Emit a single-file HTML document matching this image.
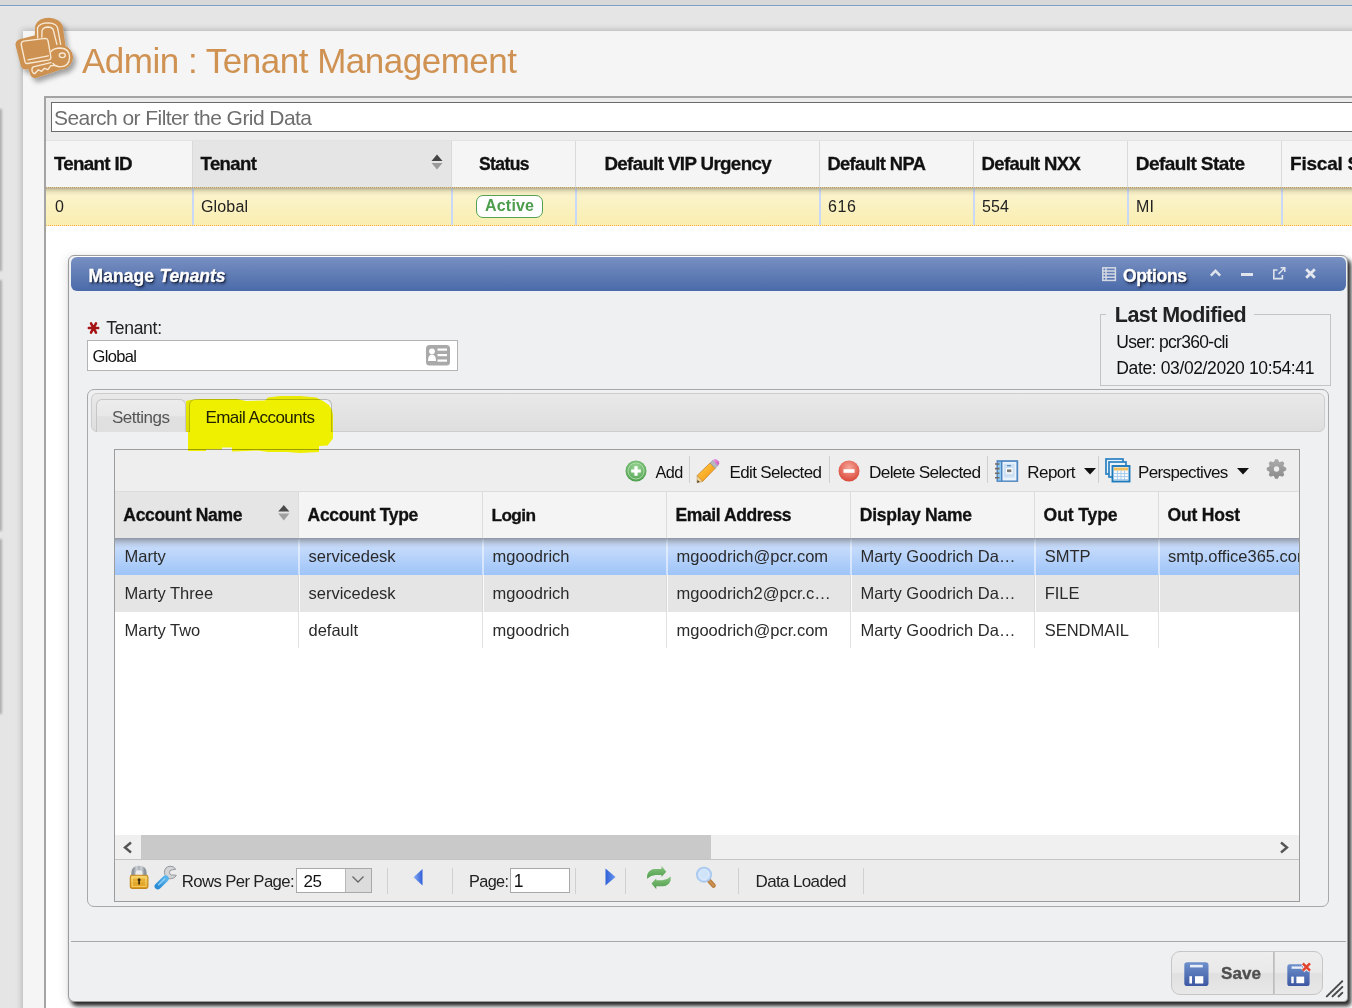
<!DOCTYPE html>
<html><head><meta charset="utf-8"><title>Admin : Tenant Management</title>
<style>
html,body{margin:0;padding:0;}
body{width:1352px;height:1008px;overflow:hidden;position:relative;background:#e5e5e5;font-family:"Liberation Sans",sans-serif;}
.a{position:absolute;}
.t{position:absolute;white-space:nowrap;line-height:normal;}
svg.a{overflow:visible;}
</style></head><body>
<div class="a" style="left:0px;top:0px;width:1352px;height:5px;background:#d8d8d8"></div>
<div class="a" style="left:0px;top:5px;width:1352px;height:1px;background:#7d9dc2"></div>
<div class="a" style="left:0px;top:6px;width:1352px;height:1px;background:#ebe8e8"></div>
<div class="a" style="left:-2px;top:109px;width:4px;height:162px;background:#b0b0b0;filter:blur(0.8px)"></div>
<div class="a" style="left:-2px;top:280px;width:4px;height:251px;background:#b0b0b0;filter:blur(0.8px)"></div>
<div class="a" style="left:-2px;top:539px;width:4px;height:175px;background:#b0b0b0;filter:blur(0.8px)"></div>
<div class="a" style="left:23px;top:31px;width:1340px;height:990px;background:#f5f5f5;box-shadow:-1px -1px 6px rgba(0,0,0,0.22)"></div>
<div class="t" style="left:82.00px;top:41.33px;font-size:35px;color:#cf9252;letter-spacing:-0.494px;">Admin : Tenant Management</div>
<div class="a" style="left:44px;top:96px;width:1320px;height:920px;background:#fff;border:2px solid #a4a4a4;box-sizing:border-box"></div>
<div class="a" style="left:46px;top:98px;width:1310px;height:42px;background:#ececec"></div>
<div class="a" style="left:51px;top:102px;width:1310px;height:30px;background:#fff;border:1px solid #6b6b6b;box-sizing:border-box"></div>
<div class="t" style="left:54.00px;top:106.00px;font-size:21px;color:#6e6e6e;letter-spacing:-0.562px;">Search or Filter the Grid Data</div>
<div class="a" style="left:46px;top:140px;width:1310px;height:47px;background:#f5f5f5;border-top:1px solid #e2e2e2;box-sizing:border-box"></div>
<div class="a" style="left:192px;top:141px;width:259px;height:46px;background:#e5e5e5"></div>
<div class="a" style="left:192px;top:141px;width:1px;height:46px;background:#dadada"></div>
<div class="a" style="left:451px;top:141px;width:1px;height:46px;background:#dadada"></div>
<div class="a" style="left:575px;top:141px;width:1px;height:46px;background:#dadada"></div>
<div class="a" style="left:819px;top:141px;width:1px;height:46px;background:#dadada"></div>
<div class="a" style="left:973px;top:141px;width:1px;height:46px;background:#dadada"></div>
<div class="a" style="left:1127px;top:141px;width:1px;height:46px;background:#dadada"></div>
<div class="a" style="left:1281px;top:141px;width:1px;height:46px;background:#dadada"></div>
<div class="a" style="left:46px;top:187px;width:1310px;height:38px;background:linear-gradient(#9d9779 0px,#c9c19c 2px,#ece4bc 5px,#fbf3ca 9px,#faeeb0 38px)"></div>
<div class="a" style="left:46px;top:187px;width:1310px;height:1px;background:repeating-linear-gradient(90deg,#b89a62 0 1px,#ddd0b0 1px 2px)"></div>
<div class="a" style="left:46px;top:225px;width:1310px;height:1px;background:repeating-linear-gradient(90deg,#f6b040 0 1px,#fde8b8 1px 2px)"></div>
<div class="a" style="left:192px;top:188px;width:2px;height:37px;background:linear-gradient(#a8b0c0,#c8d8f6 6px,#c8d8f6)"></div>
<div class="a" style="left:451px;top:188px;width:2px;height:37px;background:linear-gradient(#a8b0c0,#c8d8f6 6px,#c8d8f6)"></div>
<div class="a" style="left:575px;top:188px;width:2px;height:37px;background:linear-gradient(#a8b0c0,#c8d8f6 6px,#c8d8f6)"></div>
<div class="a" style="left:819px;top:188px;width:2px;height:37px;background:linear-gradient(#a8b0c0,#c8d8f6 6px,#c8d8f6)"></div>
<div class="a" style="left:973px;top:188px;width:2px;height:37px;background:linear-gradient(#a8b0c0,#c8d8f6 6px,#c8d8f6)"></div>
<div class="a" style="left:1127px;top:188px;width:2px;height:37px;background:linear-gradient(#a8b0c0,#c8d8f6 6px,#c8d8f6)"></div>
<div class="a" style="left:1281px;top:188px;width:2px;height:37px;background:linear-gradient(#a8b0c0,#c8d8f6 6px,#c8d8f6)"></div>
<svg class="a" style="left:430px;top:153px" width="14" height="18"><path d="M1.5 8 L7 1.5 L12.5 8Z" fill="#444"/><path d="M1.5 10 L7 16.5 L12.5 10Z" fill="#9a9a9a"/></svg>
<div class="t" style="left:54.00px;top:153.03px;font-size:18.75px;color:#111;font-weight:bold;letter-spacing:-0.694px;-webkit-text-stroke:0.3px #111;">Tenant ID</div>
<div class="t" style="left:200.60px;top:153.26px;font-size:18.5px;color:#111;font-weight:bold;letter-spacing:-0.610px;-webkit-text-stroke:0.3px #111;">Tenant</div>
<div class="t" style="left:479.00px;top:154.16px;font-size:17.5px;color:#111;font-weight:bold;letter-spacing:-0.600px;-webkit-text-stroke:0.3px #111;">Status</div>
<div class="t" style="left:604.40px;top:153.03px;font-size:18.75px;color:#111;font-weight:bold;letter-spacing:-0.644px;-webkit-text-stroke:0.3px #111;">Default VIP Urgency</div>
<div class="t" style="left:827.40px;top:153.48px;font-size:18.25px;color:#111;font-weight:bold;letter-spacing:-0.560px;-webkit-text-stroke:0.3px #111;">Default NPA</div>
<div class="t" style="left:981.60px;top:153.26px;font-size:18.5px;color:#111;font-weight:bold;letter-spacing:-0.670px;-webkit-text-stroke:0.3px #111;">Default NXX</div>
<div class="t" style="left:1135.80px;top:152.81px;font-size:19px;color:#111;font-weight:bold;letter-spacing:-0.579px;-webkit-text-stroke:0.3px #111;">Default State</div>
<div class="t" style="left:1290.00px;top:152.81px;font-size:19px;color:#111;font-weight:bold;letter-spacing:-0.223px;-webkit-text-stroke:0.3px #111;">Fiscal Start</div>
<div class="t" style="left:55.00px;top:198.12px;font-size:16px;color:#222;">0</div>
<div class="t" style="left:201.00px;top:198.12px;font-size:16px;color:#222;letter-spacing:0.150px;">Global</div>
<div class="t" style="left:828.00px;top:198.12px;font-size:16px;color:#222;letter-spacing:0.650px;">616</div>
<div class="t" style="left:982.00px;top:198.12px;font-size:16px;color:#222;letter-spacing:0.150px;">554</div>
<div class="t" style="left:1136.00px;top:198.12px;font-size:16px;color:#222;letter-spacing:0.250px;">MI</div>
<div class="a" style="left:476px;top:195px;width:67px;height:23px;background:#fff;border:1px solid #53a253;border-radius:7px;box-sizing:border-box"></div>
<div class="t" style="left:485.00px;top:197.02px;font-size:16px;color:#4c9d4c;font-weight:bold;letter-spacing:0.200px;">Active</div>
<svg class="a" style="left:12px;top:14px" width="72" height="72" viewBox="0 0 72 72">
<defs><filter id="ds" x="-30%" y="-30%" width="160%" height="160%"><feGaussianBlur in="SourceAlpha" stdDeviation="2.6"/><feOffset dx="3" dy="4"/><feComponentTransfer><feFuncA type="linear" slope="0.35"/></feComponentTransfer><feMerge><feMergeNode/><feMergeNode in="SourceGraphic"/></feMerge></filter></defs>
<g filter="url(#ds)">
<g fill="#cd9251" stroke="#cd9251" stroke-linejoin="round" stroke-linecap="round">
<path d="M9 30.5 L33.5 24.3 L39 44 L14 50Z" stroke-width="11"/>
<path d="M27.5 25 L27.8 13 Q30 8.5 36.8 8.5 Q44 9 46 13 L48.6 31 L38 36Z" stroke-width="9.5"/>
<circle cx="48.5" cy="43.3" r="12"/>
<path d="M21 53 L40 48 L44 52 L23 59Z" stroke-width="10"/>
</g>
<g fill="none" stroke="#fbeedd" stroke-width="1.35" stroke-linejoin="round" stroke-linecap="round" opacity="0.95">
<path d="M9.2 30.5 Q9.3 27.6 11.5 27.2 L33.3 24.3 Q35.6 24.5 36 26.6 L38.9 43 Q39 45.4 37 45.8 L15.5 49.5 Q13.5 49.8 13 47.8 Z"/>
<path d="M16 45.9 L36.3 41.8"/>
<path d="M25.7 23.8 L25.5 14 Q27 8.8 36.6 8.8 Q44.5 9.3 45.6 14 L48.6 30.3"/>
<path d="M29.8 23.2 L30 16.5 Q31.5 13 36 13 Q40.5 13.3 41.3 16 L44.9 30.4"/>
<path d="M39 37.5 Q42 34 48.3 34 Q57.6 34.5 57.6 43.4 Q57.2 52.6 48.3 52.8 Q43.5 52.6 41 49.5"/>
<ellipse cx="50.3" cy="41.3" rx="3" ry="2.3"/>
<path d="M38.9 48.6 L21.2 52.9 Q19.3 54.2 20.2 57.2 Q21.2 59.8 23 59.5 L26.3 55.8 L29.6 57.3 L32.5 54.3 L35.9 55.6 L38.8 51.7 L44.3 51.6"/>
</g>
</g></svg>
<div class="a" style="left:68px;top:255px;width:1280px;height:747px;background:#eff0f2;border:1px solid #9c9c9c;border-radius:6px 6px 4px 6px;box-sizing:border-box;box-shadow:3px 4px 4px rgba(0,0,0,0.85),-3px 0 8px rgba(0,0,0,0.08)"></div>
<div class="a" style="left:75px;top:256px;width:1266px;height:1px;background:#fff"></div>
<div class="a" style="left:71px;top:257px;width:1275px;height:34px;background:linear-gradient(#7890c2,#4a6aa9);border-radius:6px"></div>
<div class="t" style="left:88.50px;top:266.16px;font-size:17.5px;color:#fff;font-weight:bold;letter-spacing:0.050px;text-shadow:1px 1px 1px #17223e,1.5px 1.5px 3px rgba(10,20,50,0.7);-webkit-text-stroke:0.35px #fff;">Manage</div>
<div class="t" style="left:159.50px;top:266.16px;font-size:17.5px;color:#fff;font-weight:bold;font-style:italic;letter-spacing:-0.092px;text-shadow:1px 1px 1px #17223e,1.5px 1.5px 3px rgba(10,20,50,0.7);-webkit-text-stroke:0.35px #fff;">Tenants</div>
<div class="t" style="left:1123.00px;top:266.16px;font-size:17.5px;color:#fff;font-weight:bold;letter-spacing:-0.350px;text-shadow:1px 1px 1px #17223e,1.5px 1.5px 3px rgba(10,20,50,0.7);-webkit-text-stroke:0.35px #fff;">Options</div>
<svg class="a" style="left:1101px;top:266px" width="16" height="16"><g fill="none" stroke="#d4d9e3" stroke-width="1.5"><rect x="1.8" y="1.8" width="12.6" height="12.6"/><path d="M2 5H14.5M2 8.1H14.5M2 11.2H14.5M5 2V14.5"/></g></svg>
<svg class="a" style="left:1209px;top:268px" width="14" height="10"><path d="M1.8 7.6 L6.5 2.8 L11.2 7.6" fill="none" stroke="#dfe3ec" stroke-width="2.4"/></svg>
<div class="a" style="left:1241px;top:273px;width:12px;height:3px;background:#dfe3ec"></div>
<svg class="a" style="left:1272px;top:266px" width="15" height="15"><path d="M5.5 4H1.8V12.6H10.4V9" fill="none" stroke="#dfe3ec" stroke-width="1.6"/><path d="M6.5 8L12.2 2.3M8.6 1.8H12.8V6" fill="none" stroke="#dfe3ec" stroke-width="1.5"/></svg>
<svg class="a" style="left:1304px;top:267px" width="13" height="13"><path d="M2.2 2.2L10.8 10.8M10.8 2.2L2.2 10.8" stroke="#e4e7ee" stroke-width="2.8"/></svg>
<svg class="a" style="left:84px;top:318px" width="20" height="20"><g stroke="#a51414" stroke-width="2.5" stroke-linecap="round" filter="blur(0.4px)"><path d="M4.8 10H14.2M7 5.3L12 14.7M12 5.3L7 14.7"/></g></svg>
<div class="t" style="left:106.30px;top:318.16px;font-size:17.5px;color:#222;letter-spacing:-0.283px;">Tenant:</div>
<div class="a" style="left:87px;top:340px;width:371px;height:31px;background:#fff;border:1px solid #b4b4b4;box-sizing:border-box"></div>
<div class="t" style="left:92.60px;top:347.07px;font-size:16.5px;color:#111;letter-spacing:-0.660px;">Global</div>
<svg class="a" style="left:426px;top:345px" width="24" height="21"><rect x="0" y="0" width="24" height="20.5" rx="3.5" fill="#a9a9a9"/><circle cx="6" cy="6.3" r="2.9" fill="#fff"/><path d="M2 16 Q2 9.5 6 9.5 Q10 9.5 10 16Z" fill="#fff"/><rect x="11.5" y="3.5" width="9.5" height="2.2" fill="#fff"/><rect x="11.5" y="9" width="9.5" height="2.2" fill="#fff"/><rect x="11.5" y="14.5" width="9.5" height="2.2" fill="#fff"/></svg>
<div class="a" style="left:1100px;top:314px;width:231px;height:72px;border:1px solid #c4c4c4;box-sizing:border-box"></div>
<div class="a" style="left:1106px;top:306px;width:148px;height:14px;background:#eff0f2"></div>
<div class="t" style="left:1114.80px;top:302.54px;font-size:21.5px;color:#222;font-weight:bold;letter-spacing:-0.554px;">Last Modified</div>
<div class="t" style="left:1116.30px;top:331.76px;font-size:17.5px;color:#111;letter-spacing:-0.677px;">User: pcr360-cli</div>
<div class="t" style="left:1116.30px;top:358.16px;font-size:17.5px;color:#111;letter-spacing:-0.381px;">Date: 03/02/2020 10:54:41</div>
<div class="a" style="left:87px;top:389px;width:1242px;height:518px;border:1px solid #a9a9a9;border-radius:7px;box-sizing:border-box"></div>
<div class="a" style="left:91px;top:393px;width:1234px;height:39px;background:linear-gradient(#e9e9e9,#dedede);border:1px solid #cdcdcd;border-radius:6px;box-sizing:border-box"></div>
<div class="a" style="left:96px;top:399px;width:90px;height:33px;background:linear-gradient(#ececec 0,#e8e8e8 50%,#e0e0e0 52%,#dfdfdf 100%);border:1px solid #c6c6c6;border-bottom:none;border-radius:6px 6px 0 0;box-sizing:border-box"></div>
<div class="t" style="left:112.00px;top:407.62px;font-size:17px;color:#555;letter-spacing:-0.493px;">Settings</div>
<div class="a" style="left:189px;top:399px;width:143px;height:33px;background:#eff0f2;border:1px solid #b8b8b8;border-bottom:none;border-radius:6px 6px 0 0;box-sizing:border-box"></div>
<div class="t" style="left:205.40px;top:407.92px;font-size:17px;color:#222;letter-spacing:-0.515px;">Email Accounts</div>
<div class="a" style="left:114px;top:449px;width:1186px;height:453px;background:#fff;border:1px solid #9c9c9c;box-sizing:border-box"></div>
<div class="a" style="left:115px;top:450px;width:1184px;height:41px;background:#eeeeee"></div>
<div class="a" style="left:115px;top:491px;width:1184px;height:1px;background:#dcdcdc"></div>
<svg class="a" style="left:625px;top:460px" width="22" height="22"><defs><radialGradient id="gg" cx="50%" cy="35%" r="65%"><stop offset="0" stop-color="#9fd89a"/><stop offset="1" stop-color="#4e9f4e"/></radialGradient></defs><circle cx="11" cy="11" r="10.5" fill="url(#gg)"/><circle cx="11" cy="11" r="8" fill="none" stroke="#b8e4b0" stroke-width="1" opacity="0.8"/><path d="M11 6.2V15.8M6.2 11H15.8" stroke="#fff" stroke-width="3.2"/></svg>
<div class="t" style="left:655.40px;top:463.29px;font-size:16.25px;color:#111;letter-spacing:-0.500px;">Add</div>
<div class="a" style="left:689px;top:456px;width:1px;height:27px;background:#cfcfcf"></div>
<svg class="a" style="left:692px;top:455px" width="30" height="30"><defs><linearGradient id="pc" x1="0" y1="0" x2="1" y2="1"><stop offset="0" stop-color="#ffd050"/><stop offset="0.5" stop-color="#fbb02a"/><stop offset="1" stop-color="#ee8a12"/></linearGradient><linearGradient id="er" x1="0" y1="0" x2="1" y2="1"><stop offset="0" stop-color="#f0a8e8"/><stop offset="1" stop-color="#c84cb8"/></linearGradient></defs><path d="M5.2 20.5 L18 8 L23.2 13.3 L10.5 26.5Z" fill="url(#pc)" stroke="#c07a20" stroke-width="0.7"/><path d="M18 8 L20.8 5.2 L26 10.5 L23.2 13.3Z" fill="#b4b8bc" stroke="#8a8e92" stroke-width="0.5"/><path d="M20.8 5.2 Q22.5 3.4 24.5 4.2 L27 6.6 Q28.2 8.5 26 10.5Z" fill="url(#er)"/><path d="M5.2 20.5 L10.5 26.5 L5 27.8Z" fill="#f6d896" stroke="#b08040" stroke-width="0.5"/><path d="M5 27.8 L5.6 24.8 L7.8 26.9Z" fill="#5a4a38"/></svg>
<div class="t" style="left:729.50px;top:462.62px;font-size:17.0px;color:#111;letter-spacing:-0.642px;">Edit Selected</div>
<div class="a" style="left:829px;top:456px;width:1px;height:27px;background:#cfcfcf"></div>
<svg class="a" style="left:838px;top:460px" width="22" height="22"><defs><radialGradient id="rg" cx="50%" cy="35%" r="65%"><stop offset="0" stop-color="#f7a79a"/><stop offset="1" stop-color="#d9483a"/></radialGradient></defs><circle cx="11" cy="11" r="10.5" fill="url(#rg)"/><rect x="5.5" y="9.2" width="11" height="3.6" fill="#fff"/></svg>
<div class="t" style="left:869.00px;top:462.39px;font-size:17.25px;color:#111;letter-spacing:-0.700px;">Delete Selected</div>
<div class="a" style="left:987px;top:456px;width:1px;height:27px;background:#cfcfcf"></div>
<svg class="a" style="left:992px;top:456px" width="30" height="30"><rect x="5.2" y="4.9" width="20.3" height="20.3" fill="#6a9ed4" stroke="#5086c0" stroke-width="1.4"/><rect x="6" y="6" width="3" height="18.5" fill="#8cc8f0"/><rect x="10.3" y="6" width="14" height="18.4" fill="#eaf3fc"/><path d="M9.7 5V25" stroke="#4a80bc" stroke-width="1.2"/><rect x="11.8" y="7.8" width="10.8" height="13.8" fill="#cde0f4"/><rect x="14" y="12" width="6.6" height="5.8" rx="1" fill="#fff"/><rect x="15" y="13.4" width="4.4" height="2.8" fill="#7a7a7a"/><rect x="15" y="9" width="4" height="1.3" fill="#5a8cc4"/><g stroke="#746a64" stroke-width="1.6"><path d="M3 8H7.5M3 12.6H7.5M3 17.2H7.5M3 21.8H7.5"/></g></svg>
<div class="t" style="left:1027.30px;top:462.62px;font-size:17.0px;color:#111;letter-spacing:-0.570px;">Report</div>
<svg class="a" style="left:1084px;top:468px" width="12" height="7"><path d="M0 0H12L6 6.5Z" fill="#111"/></svg>
<div class="a" style="left:1098px;top:456px;width:1px;height:27px;background:#cfcfcf"></div>
<svg class="a" style="left:1105px;top:458px" width="26" height="25"><rect x="1" y="1" width="17" height="15" fill="#eaf3fb" stroke="#2a80c0" stroke-width="1.7"/><rect x="4" y="4" width="17" height="15" fill="#eaf3fb" stroke="#2a80c0" stroke-width="1.7"/><rect x="7.5" y="8" width="17" height="15.5" fill="#f4f8fc" stroke="#1e7abb" stroke-width="1.9"/><rect x="9" y="9.5" width="14" height="3" fill="#f0c060"/><g stroke="#9cc4e8" stroke-width="0.8"><path d="M9 15.5H23M9 18.5H23M9 21.5H23M12.5 12.5V23M16 12.5V23M19.5 12.5V23"/></g></svg>
<div class="t" style="left:1138.00px;top:462.62px;font-size:17.0px;color:#111;letter-spacing:-0.636px;">Perspectives</div>
<svg class="a" style="left:1237px;top:468px" width="12" height="7"><path d="M0 0H12L6 6.5Z" fill="#111"/></svg>
<svg class="a" style="left:1266px;top:459px" width="21" height="20"><defs><linearGradient id="gr" x1="0" y1="0" x2="0" y2="1"><stop offset="0" stop-color="#a9a9a9"/><stop offset="1" stop-color="#8e8e8e"/></linearGradient></defs><path d="M7.85 3.09 L9.14 0.30 L11.86 0.30 L13.15 3.09 L13.51 3.24 L16.40 2.17 L18.33 4.10 L17.26 6.99 L17.41 7.35 L20.20 8.64 L20.20 11.36 L17.41 12.65 L17.26 13.01 L18.33 15.90 L16.40 17.83 L13.51 16.76 L13.15 16.91 L11.86 19.70 L9.14 19.70 L7.85 16.91 L7.49 16.76 L4.60 17.83 L2.67 15.90 L3.74 13.01 L3.59 12.65 L0.80 11.36 L0.80 8.64 L3.59 7.35 L3.74 6.99 L2.67 4.10 L4.60 2.17 L7.49 3.24Z" fill="url(#gr)"/><circle cx="10.5" cy="10" r="7.4" fill="url(#gr)"/><circle cx="10.5" cy="10" r="2.7" fill="#eee"/></svg>
<div class="a" style="left:115px;top:492px;width:1184px;height:46px;background:#f4f4f4"></div>
<div class="a" style="left:115px;top:492px;width:183px;height:46px;background:#e5e5e5"></div>
<div class="a" style="left:298px;top:492px;width:1px;height:46px;background:#dcdcdc"></div>
<div class="a" style="left:482px;top:492px;width:1px;height:46px;background:#dcdcdc"></div>
<div class="a" style="left:666px;top:492px;width:1px;height:46px;background:#dcdcdc"></div>
<div class="a" style="left:850px;top:492px;width:1px;height:46px;background:#dcdcdc"></div>
<div class="a" style="left:1034px;top:492px;width:1px;height:46px;background:#dcdcdc"></div>
<div class="a" style="left:1158px;top:492px;width:1px;height:46px;background:#dcdcdc"></div>
<svg class="a" style="left:277px;top:504px" width="14" height="18"><path d="M1.2 7.6 L6.8 1 L12.4 7.6Z" fill="#4a4a4a"/><path d="M1.2 9.6 L6.8 16.6 L12.4 9.6Z" fill="#a0a0a0"/></svg>
<div class="t" style="left:123.30px;top:505.16px;font-size:17.5px;color:#111;font-weight:bold;letter-spacing:-0.305px;-webkit-text-stroke:0.3px #111;">Account Name</div>
<div class="t" style="left:307.60px;top:505.16px;font-size:17.5px;color:#111;font-weight:bold;letter-spacing:-0.336px;-webkit-text-stroke:0.3px #111;">Account Type</div>
<div class="t" style="left:491.50px;top:505.39px;font-size:17.25px;color:#111;font-weight:bold;letter-spacing:-0.613px;-webkit-text-stroke:0.3px #111;">Login</div>
<div class="t" style="left:675.60px;top:505.16px;font-size:17.5px;color:#111;font-weight:bold;letter-spacing:-0.421px;-webkit-text-stroke:0.3px #111;">Email Address</div>
<div class="t" style="left:859.80px;top:505.16px;font-size:17.5px;color:#111;font-weight:bold;letter-spacing:-0.236px;-webkit-text-stroke:0.3px #111;">Display Name</div>
<div class="t" style="left:1043.60px;top:505.16px;font-size:17.5px;color:#111;font-weight:bold;letter-spacing:-0.079px;-webkit-text-stroke:0.3px #111;">Out Type</div>
<div class="t" style="left:1167.60px;top:505.16px;font-size:17.5px;color:#111;font-weight:bold;letter-spacing:-0.214px;-webkit-text-stroke:0.3px #111;">Out Host</div>
<div class="a" style="left:115px;top:538px;width:1184px;height:37px;background:linear-gradient(#8d95a3 0px,#a7b3c7 3px,#bacbe6 6px,#c4dafb 10px,#9ec4f8 37px)"></div>
<div class="a" style="left:115px;top:575px;width:1184px;height:37px;background:#e5e5e5"></div>
<div class="a" style="left:298px;top:538px;width:2px;height:37px;background:linear-gradient(rgba(255,255,255,0.05),rgba(255,255,255,0.5) 10px)"></div>
<div class="a" style="left:298px;top:575px;width:1px;height:37px;background:#d9d9d9"></div>
<div class="a" style="left:299px;top:575px;width:1px;height:37px;background:#fbfbfb"></div>
<div class="a" style="left:298px;top:612px;width:1px;height:36px;background:#e2e2e2"></div>
<div class="a" style="left:482px;top:538px;width:2px;height:37px;background:linear-gradient(rgba(255,255,255,0.05),rgba(255,255,255,0.5) 10px)"></div>
<div class="a" style="left:482px;top:575px;width:1px;height:37px;background:#d9d9d9"></div>
<div class="a" style="left:483px;top:575px;width:1px;height:37px;background:#fbfbfb"></div>
<div class="a" style="left:482px;top:612px;width:1px;height:36px;background:#e2e2e2"></div>
<div class="a" style="left:666px;top:538px;width:2px;height:37px;background:linear-gradient(rgba(255,255,255,0.05),rgba(255,255,255,0.5) 10px)"></div>
<div class="a" style="left:666px;top:575px;width:1px;height:37px;background:#d9d9d9"></div>
<div class="a" style="left:667px;top:575px;width:1px;height:37px;background:#fbfbfb"></div>
<div class="a" style="left:666px;top:612px;width:1px;height:36px;background:#e2e2e2"></div>
<div class="a" style="left:850px;top:538px;width:2px;height:37px;background:linear-gradient(rgba(255,255,255,0.05),rgba(255,255,255,0.5) 10px)"></div>
<div class="a" style="left:850px;top:575px;width:1px;height:37px;background:#d9d9d9"></div>
<div class="a" style="left:851px;top:575px;width:1px;height:37px;background:#fbfbfb"></div>
<div class="a" style="left:850px;top:612px;width:1px;height:36px;background:#e2e2e2"></div>
<div class="a" style="left:1034px;top:538px;width:2px;height:37px;background:linear-gradient(rgba(255,255,255,0.05),rgba(255,255,255,0.5) 10px)"></div>
<div class="a" style="left:1034px;top:575px;width:1px;height:37px;background:#d9d9d9"></div>
<div class="a" style="left:1035px;top:575px;width:1px;height:37px;background:#fbfbfb"></div>
<div class="a" style="left:1034px;top:612px;width:1px;height:36px;background:#e2e2e2"></div>
<div class="a" style="left:1158px;top:538px;width:2px;height:37px;background:linear-gradient(rgba(255,255,255,0.05),rgba(255,255,255,0.5) 10px)"></div>
<div class="a" style="left:1158px;top:575px;width:1px;height:37px;background:#d9d9d9"></div>
<div class="a" style="left:1159px;top:575px;width:1px;height:37px;background:#fbfbfb"></div>
<div class="a" style="left:1158px;top:612px;width:1px;height:36px;background:#e2e2e2"></div>
<div class="t" style="left:124.50px;top:547.07px;font-size:16.5px;color:#2a2a2a;">Marty</div>
<div class="t" style="left:308.50px;top:547.07px;font-size:16.5px;color:#2a2a2a;">servicedesk</div>
<div class="t" style="left:492.50px;top:547.07px;font-size:16.5px;color:#2a2a2a;">mgoodrich</div>
<div class="t" style="left:676.50px;top:547.07px;font-size:16.5px;color:#2a2a2a;">mgoodrich@pcr.com</div>
<div class="t" style="left:860.50px;top:547.07px;font-size:16.5px;color:#2a2a2a;">Marty Goodrich Da…</div>
<div class="t" style="left:1044.70px;top:547.07px;font-size:16.5px;color:#2a2a2a;">SMTP</div>
<div class="t" style="left:1168.00px;top:547.07px;font-size:16.5px;color:#2a2a2a;width:131.0px;overflow:hidden;">smtp.office365.com</div>
<div class="t" style="left:124.50px;top:584.07px;font-size:16.5px;color:#2a2a2a;">Marty Three</div>
<div class="t" style="left:308.50px;top:584.07px;font-size:16.5px;color:#2a2a2a;">servicedesk</div>
<div class="t" style="left:492.50px;top:584.07px;font-size:16.5px;color:#2a2a2a;">mgoodrich</div>
<div class="t" style="left:676.50px;top:584.07px;font-size:16.5px;color:#2a2a2a;">mgoodrich2@pcr.c…</div>
<div class="t" style="left:860.50px;top:584.07px;font-size:16.5px;color:#2a2a2a;">Marty Goodrich Da…</div>
<div class="t" style="left:1044.70px;top:584.07px;font-size:16.5px;color:#2a2a2a;">FILE</div>
<div class="t" style="left:124.50px;top:621.07px;font-size:16.5px;color:#2a2a2a;">Marty Two</div>
<div class="t" style="left:308.50px;top:621.07px;font-size:16.5px;color:#2a2a2a;">default</div>
<div class="t" style="left:492.50px;top:621.07px;font-size:16.5px;color:#2a2a2a;">mgoodrich</div>
<div class="t" style="left:676.50px;top:621.07px;font-size:16.5px;color:#2a2a2a;">mgoodrich@pcr.com</div>
<div class="t" style="left:860.50px;top:621.07px;font-size:16.5px;color:#2a2a2a;">Marty Goodrich Da…</div>
<div class="t" style="left:1044.70px;top:621.07px;font-size:16.5px;color:#2a2a2a;">SENDMAIL</div>
<div class="a" style="left:115px;top:835px;width:1184px;height:24px;background:#f0f0f0"></div>
<div class="a" style="left:141px;top:835px;width:570px;height:24px;background:#c9c9c9"></div>
<div class="a" style="left:115px;top:859px;width:1184px;height:1px;background:#c4c4c4"></div>
<svg class="a" style="left:122px;top:841px" width="11" height="13"><path d="M9 1.5 L3 6.5 L9 11.5" fill="none" stroke="#555" stroke-width="2.4"/></svg>
<svg class="a" style="left:1279px;top:841px" width="11" height="13"><path d="M2 1.5 L8 6.5 L2 11.5" fill="none" stroke="#555" stroke-width="2.4"/></svg>
<div class="a" style="left:115px;top:860px;width:1184px;height:41px;background:#ececec"></div>
<svg class="a" style="left:129px;top:865px" width="21" height="25"><defs><linearGradient id="sh" x1="0" x2="1"><stop offset="0" stop-color="#8e949c"/><stop offset="0.3" stop-color="#cfd3d8"/><stop offset="0.5" stop-color="#a9aeb5"/><stop offset="0.7" stop-color="#cfd3d8"/><stop offset="1" stop-color="#8e949c"/></linearGradient><linearGradient id="lb" x1="0" y1="0" x2="0" y2="1"><stop offset="0" stop-color="#f6d060"/><stop offset="1" stop-color="#e09a18"/></linearGradient></defs><path d="M4.4 12 V8.5 Q4.4 3 10 3 Q15.6 3 15.6 8.5 V12" fill="none" stroke="url(#sh)" stroke-width="4.3"/><rect x="1.3" y="10.2" width="17.6" height="13.2" rx="1.8" fill="url(#lb)" stroke="#c4861c" stroke-width="1.1"/><rect x="3.2" y="12" width="13.8" height="9.6" fill="none" stroke="#fbe08a" stroke-width="0.8" opacity="0.8"/><path d="M4 15H16M4 18H16" stroke="#d89a20" stroke-width="0.8"/><path d="M10.1 13.2 Q8.6 13.2 8.6 14.8 Q8.6 15.8 9.3 16.2 L9.2 19.5 H11 L10.9 16.2 Q11.6 15.8 11.6 14.8 Q11.6 13.2 10.1 13.2Z" fill="#3a2808"/></svg>
<svg class="a" style="left:154px;top:865px" width="24" height="25"><defs><linearGradient id="wh" x1="0" y1="1" x2="1" y2="0"><stop offset="0" stop-color="#2c8cd6"/><stop offset="1" stop-color="#58b4ec"/></linearGradient></defs><path d="M21.8 4.2 Q20 1 16 1.2 Q10.8 1.8 10.4 7.2 Q10.5 10 12.2 11.6 L14 13.5 Q16.5 14.2 19.2 13.2 Q21.6 12.2 22.3 10.2 L17.6 10 Q15.6 9.6 15.4 7.4 Q15.6 5.2 17.6 5 Z" fill="#d2d4d6" stroke="#8c9094" stroke-width="0.9"/><path d="M3.8 21.2 L11.6 13.6" stroke="url(#wh)" stroke-width="6.4" stroke-linecap="round"/><path d="M4.6 19.8 L10.8 13.8" stroke="#a6dcfa" stroke-width="1.4" stroke-linecap="round" stroke-dasharray="1.5 0.8" opacity="0.8"/></svg>
<div class="t" style="left:181.80px;top:871.84px;font-size:16.75px;color:#222;letter-spacing:-0.635px;">Rows Per Page:</div>
<div class="a" style="left:296px;top:868px;width:76px;height:25px;background:#fff;border:1px solid #a8a8a8;box-sizing:border-box"></div>
<div class="a" style="left:345px;top:869px;width:26px;height:23px;background:#dcdcdc;border-left:1px solid #b8b8b8;box-sizing:border-box"></div>
<svg class="a" style="left:351px;top:875px" width="14" height="9"><path d="M1.5 1.5 L7 7 L12.5 1.5" fill="none" stroke="#666" stroke-width="1.3"/></svg>
<div class="t" style="left:303.60px;top:871.62px;font-size:17.0px;color:#111;letter-spacing:-0.500px;">25</div>
<div class="a" style="left:387px;top:868px;width:1px;height:26px;background:#d0d0d0"></div>
<svg class="a" style="left:413px;top:868px" width="11" height="19"><defs><linearGradient id="bl" x1="0" x2="1"><stop offset="0" stop-color="#8ab0f4"/><stop offset="1" stop-color="#2f5ed8"/></linearGradient></defs><path d="M9.5 1 L0.5 9.2 L9.5 17.5Z" fill="url(#bl)"/></svg>
<div class="a" style="left:452px;top:868px;width:1px;height:26px;background:#d0d0d0"></div>
<div class="t" style="left:469.00px;top:872.29px;font-size:16.25px;color:#222;letter-spacing:-0.613px;">Page:</div>
<div class="a" style="left:510px;top:868px;width:60px;height:25px;background:#fff;border:1px solid #a8a8a8;box-sizing:border-box"></div>
<div class="t" style="left:513.80px;top:871.16px;font-size:17.5px;color:#111;">1</div>
<div class="a" style="left:575px;top:868px;width:1px;height:26px;background:#d0d0d0"></div>
<svg class="a" style="left:605px;top:868px" width="11" height="19"><defs><linearGradient id="br" x1="0" x2="1"><stop offset="0" stop-color="#2f5ed8"/><stop offset="1" stop-color="#6a98ee"/></linearGradient></defs><path d="M0.5 0.5 L10.5 9 L0.5 17.5Z" fill="url(#br)"/></svg>
<div class="a" style="left:625px;top:868px;width:1px;height:26px;background:#d0d0d0"></div>
<svg class="a" style="left:646px;top:866px" width="27" height="25"><defs><linearGradient id="rf" x1="0" y1="0" x2="0" y2="1"><stop offset="0" stop-color="#86c47e"/><stop offset="1" stop-color="#4f9d4c"/></linearGradient><linearGradient id="rf2" x1="0" y1="0" x2="0" y2="1"><stop offset="0" stop-color="#4f9d4c"/><stop offset="1" stop-color="#86c47e"/></linearGradient></defs><path id="ar" d="M1 12.8 L1.2 8.8 Q3 3 9.5 3 L15.5 3 L15.5 0 L20.3 5.8 L15.5 11 L15.5 9 L9.5 9 Q5 9.2 1 12.8Z" fill="url(#rf)"/><path d="M1 12.8 L1.2 8.8 Q3 3 9.5 3 L15.5 3 L15.5 0 L20.3 5.8 L15.5 11 L15.5 9 L9.5 9 Q5 9.2 1 12.8Z" fill="url(#rf2)" transform="rotate(180 12.9 11.6)"/></svg>
<svg class="a" style="left:695px;top:866px" width="23" height="22"><path d="M13.5 14 L18.5 19.5" stroke="#b97d3e" stroke-width="4.6" stroke-linecap="round"/><path d="M13.5 14 L18.5 19.5" stroke="#d9a060" stroke-width="2" stroke-linecap="round" opacity="0.6"/><circle cx="9" cy="8.7" r="7.2" fill="#c6dcf6" stroke="#a8c8f0" stroke-width="1.6"/><circle cx="9" cy="8.7" r="5" fill="#cfe3f9" stroke="#e2eefc" stroke-width="0.8"/></svg>
<div class="a" style="left:738px;top:868px;width:1px;height:26px;background:#d0d0d0"></div>
<div class="t" style="left:755.50px;top:871.62px;font-size:17.0px;color:#222;letter-spacing:-0.635px;">Data Loaded</div>
<div class="a" style="left:863px;top:868px;width:1px;height:26px;background:#d0d0d0"></div>
<div class="a" style="left:71px;top:941px;width:1275px;height:1px;background:#a8a8a8"></div>
<div class="a" style="left:1171px;top:951px;width:152px;height:44px;background:linear-gradient(#eeeeee 0,#e9e9e9 48%,#e0e0e0 52%,#e8e8e8 100%);border:1px solid #c6c6c6;border-radius:9px;box-sizing:border-box"></div>
<div class="a" style="left:1273px;top:952px;width:2px;height:42px;background:linear-gradient(90deg,#b8b8b8,#cfcfcf)"></div>
<svg class="a" style="left:1184px;top:962px" width="25" height="25"><defs><linearGradient id="fl" x1="0" y1="0" x2="0" y2="1"><stop offset="0" stop-color="#6d90cc"/><stop offset="1" stop-color="#3d58a2"/></linearGradient></defs><rect x="0.3" y="0.3" width="24.2" height="23.8" rx="2.8" fill="url(#fl)"/><rect x="6" y="2.8" width="12.8" height="2.6" fill="#e8eef8"/><rect x="5.4" y="14.2" width="2.6" height="7.3" fill="#fff"/><rect x="11" y="14.2" width="8.3" height="7.3" fill="#fff"/></svg>
<div class="t" style="left:1221.00px;top:964.22px;font-size:17px;color:#4f4f4f;font-weight:bold;letter-spacing:0.067px;-webkit-text-stroke:0.35px #4f4f4f;">Save</div>
<svg class="a" style="left:1286px;top:961px" width="27" height="27"><defs><linearGradient id="fl2" x1="0" y1="0" x2="0" y2="1"><stop offset="0" stop-color="#6d90cc"/><stop offset="1" stop-color="#3d58a2"/></linearGradient></defs><rect x="1.3" y="3.3" width="22.3" height="21.7" rx="2.6" fill="url(#fl2)"/><rect x="5.6" y="5.4" width="10.5" height="2.4" fill="#e8eef8"/><rect x="5.3" y="15.6" width="2.4" height="6.6" fill="#fff"/><rect x="10.4" y="15.6" width="7.8" height="6.6" fill="#fff"/><path d="M16.8 2.4 L24 9.6 M24 2.4 L16.8 9.6" stroke="#f2f2f2" stroke-width="4.6"/><path d="M16.8 2.4 L24 9.6 M24 2.4 L16.8 9.6" stroke="#e2452f" stroke-width="2.7"/></svg>
<svg class="a" style="left:1326px;top:980px" width="18" height="18"><g stroke="#4a4a4a" stroke-width="2" stroke-linecap="round" stroke-dasharray="1.6 0.9"><path d="M0.8 16.4 L16.3 1.2M6.5 16.4 L16.3 7M12.5 16.4 L16.3 12.8"/></g></svg>
<svg class="a" style="left:0;top:0;mix-blend-mode:multiply" width="400" height="470"><polygon points="186,401 190,400 201,399 237,399 246,401 265,400.5 268,397.5 280,396 300,396 316,397.5 323,401 329,405 332,410 333,415 333,438.5 327.5,445.5 319,446 319,452 300,453 287,452 268,452 258,450.5 246,451 232,451.5 232,447.5 222,447.5 222,449.5 206,449.5 206,451 188,451 188,432 186,431.5" fill="#ffff00"/></svg>
</body></html>
